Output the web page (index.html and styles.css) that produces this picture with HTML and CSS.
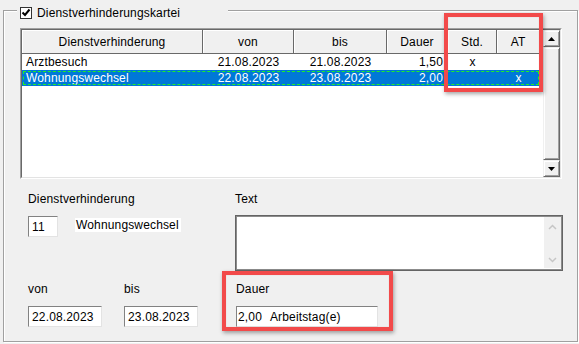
FILE: index.html
```html
<!DOCTYPE html>
<html lang="de">
<head>
<meta charset="utf-8">
<title>Dienstverhinderungskartei</title>
<link rel="stylesheet" href="styles.css">
</head>
<body>
<div class="group">
  <div class="legend">
    <span class="check">
      <svg width="10" height="10" viewBox="0 0 10 10"><polyline points="1.5,4.5 4,7 8.5,1.5" fill="none" stroke="#000" stroke-width="2"/></svg>
    </span>
    <span class="legend-text">Dienstverhinderungskartei</span>
  </div>

  <div class="listbox">
    <div class="list-inner">
      <div class="table">
        <div class="thead">
          <div class="th">Dienstverhinderung</div>
          <div class="th">von</div>
          <div class="th">bis</div>
          <div class="th">Dauer</div>
          <div class="th">Std.</div>
          <div class="th">AT</div>
          <div class="th filler"></div>
        </div>
        <div class="row">
          <div class="td left">Arztbesuch</div>
          <div class="td">21.08.2023</div>
          <div class="td">21.08.2023</div>
          <div class="td right">1,50</div>
          <div class="td">x</div>
          <div class="td"></div>
        </div>
        <div class="row selected">
          <div class="td left">Wohnungswechsel</div>
          <div class="td">22.08.2023</div>
          <div class="td">23.08.2023</div>
          <div class="td right">2,00</div>
          <div class="td"></div>
          <div class="td">x</div>
        </div>
      </div>
      <div class="vscroll">
        <div class="sbtn">
          <svg width="7" height="4" viewBox="0 0 7 4"><polygon points="0,4 7,4 3.5,0" fill="#000"/></svg>
        </div>
        <div class="thumb"></div>
        <div class="sbtn">
          <svg width="7" height="4" viewBox="0 0 7 4"><polygon points="0,0 7,0 3.5,4" fill="#000"/></svg>
        </div>
      </div>
    </div>
  </div>

  <div class="lower">
    <div class="lbl span2">Dienstverhinderung</div>
    <div class="lbl">Text</div>

    <div class="span2 dv-row">
      <div class="input num">11</div>
      <div class="readonly">Wohnungswechsel</div>
    </div>
    <div class="memo">
      <div class="memo-body"></div>
      <div class="memo-scroll">
        <svg width="9" height="6" viewBox="0 0 9 6"><polyline points="1,5 4.5,1.5 8,5" fill="none" stroke="#c6c6c6" stroke-width="1.5"/></svg>
        <svg width="9" height="6" viewBox="0 0 9 6"><polyline points="1,1 4.5,4.5 8,1" fill="none" stroke="#c6c6c6" stroke-width="1.5"/></svg>
      </div>
    </div>

    <div class="lbl">von</div>
    <div class="lbl">bis</div>
    <div class="lbl dauer-lbl">Dauer</div>

    <div class="input date">22.08.2023</div>
    <div class="input date">23.08.2023</div>
    <div class="input dauer"><span>2,00</span><span class="unit">Arbeitstag(e)</span></div>
  </div>
</div>

<div class="mark mark-cols"></div>
<div class="mark mark-dauer"></div>
</body>
</html>
```

FILE: styles.css
```css
* { box-sizing: border-box; }

html, body {
  margin: 0;
  padding: 0;
  background: #f0f0f0;
}

body {
  position: relative;
  width: 579px;
  height: 344px;
  overflow: hidden;
  font-family: "Liberation Sans", Arial, sans-serif;
  font-size: 12px;
  letter-spacing: 0.15px;
  color: #000;
}

.group {
  margin: 10px 0 0 3px;
  width: 575px;
  height: 332px;
  border: 1px solid #a0a0a0;
  box-shadow: inset 1px 1px 0 #fff, 1px 1px 0 #fff;
}

.legend {
  display: flex;
  align-items: flex-start;
  margin: -6px 0 0 13px;
  width: 211px;
  height: 16px;
  padding-left: 3px;
  background: #f0f0f0;
}

.check {
  display: flex;
  align-items: center;
  justify-content: center;
  width: 12px;
  height: 12px;
  margin-top: 2px;
  background: #fff;
  border: 1px solid #333;
}

.legend-text {
  margin-left: 5px;
  line-height: 16px;
}

.listbox {
  margin: 7px 0 0 16px;
  width: 542px;
  height: 151px;
  border: 1px solid;
  border-color: #a0a0a0 #fff #fff #a0a0a0;
}

.list-inner {
  display: flex;
  height: 100%;
  border: 1px solid;
  border-color: #696969 #e3e3e3 #e3e3e3 #696969;
  background: #fff;
}

.table {
  width: 521px;
}

.thead {
  display: grid;
  grid-template-columns: 181px 91px 93px 61px 49px 43px 3px;
  height: 24px;
}

.th {
  background: #f0f0f0;
  border-right: 1px solid #696969;
  border-bottom: 1px solid #696969;
  box-shadow: inset 1px 1px 0 #fff;
  text-align: center;
  padding-top: 2px;
  line-height: 21px;
  white-space: nowrap;
}

.th.filler {
  border-right: none;
}

.row {
  display: grid;
  grid-template-columns: 181px 91px 93px 61px 49px 43px;
  width: 518px;
  height: 16px;
  line-height: 16px;
}

.td {
  text-align: center;
  white-space: nowrap;
}

.td.left {
  text-align: left;
  padding-left: 4px;
}

.td.right {
  text-align: right;
  padding-right: 5px;
}

.row.selected {
  background: #0078d7;
  color: #fff;
  outline: 1px dashed #22f022;
  outline-offset: -2px;
}

.vscroll {
  display: flex;
  flex-direction: column;
  width: 17px;
  background: #f0f0f0;
}

.sbtn {
  display: flex;
  align-items: center;
  justify-content: center;
  height: 17px;
  background: #f0f0f0;
  border: 1px solid;
  border-color: #f0f0f0 #696969 #696969 #f0f0f0;
  box-shadow: inset 1px 1px 0 #fff, inset -1px -1px 0 #a0a0a0;
}

.thumb {
  flex: 1;
  border: 1px solid;
  border-color: #f0f0f0 #696969 #696969 #f0f0f0;
  box-shadow: inset 1px 1px 0 #fff, inset -1px -1px 0 #a0a0a0;
}

.lower {
  display: grid;
  grid-template-columns: 96px 111px 328px;
  grid-template-rows: 24px 66px 25px 21px;
  margin: 12px 0 0 24px;
}

.lbl {
  line-height: 16px;
  height: 16px;
}

.span2 {
  grid-column: span 2;
}

.dauer-lbl {
  margin-left: 1px;
}

.dv-row {
  display: flex;
  align-items: flex-start;
}

.input {
  height: 21px;
  background: #fff;
  border: 1px solid;
  border-color: #828282 #e3e3e3 #e3e3e3 #828282;
  padding: 1px 0 0 3px;
  line-height: 18px;
  white-space: nowrap;
}

.input.num {
  width: 30px;
  margin-top: 1px;
}

.readonly {
  margin: 3px 0 0 17px;
  width: 106px;
  height: 14px;
  line-height: 14px;
  padding-left: 1px;
  background: #fff;
}

.input.date {
  width: 74px;
}

.input.dauer {
  width: 142px;
  margin-left: 1px;
  padding-left: 1px;
}

.unit {
  margin-left: 8px;
}

.memo {
  display: flex;
  width: 328px;
  height: 56px;
  border: 1px solid #646464;
  box-shadow: inset 0 0 0 1px #8c8c8c;
  background: #fff;
  padding: 1px 1px 2px 1px;
}

.memo-body {
  flex: 1;
}

.memo-scroll {
  display: flex;
  flex-direction: column;
  align-items: center;
  justify-content: space-between;
  width: 17px;
  padding: 7px 0 5px;
  background: #f0f0f0;
}

.mark {
  position: absolute;
  border: 4px solid #f24a4a;
  box-shadow: 1px 2px 4px rgba(0, 0, 0, 0.35), inset 0 0 1px rgba(120, 0, 0, 0.3);
}

.mark-cols {
  left: 444px;
  top: 13px;
  width: 99px;
  height: 79px;
}

.mark-dauer {
  left: 222px;
  top: 271px;
  width: 171px;
  height: 60px;
}
```
